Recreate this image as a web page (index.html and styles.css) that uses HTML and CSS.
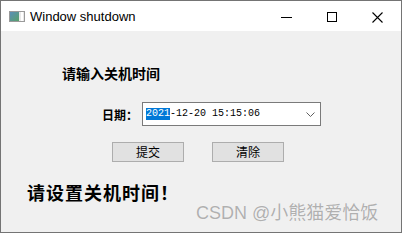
FILE: index.html
```html
<!DOCTYPE html>
<html>
<head>
<meta charset="utf-8">
<link rel="stylesheet" href="styles.css">
</head>
<body>
<div class="window">
  <div class="titlebar">
    <svg class="app-icon" width="16" height="11" viewBox="0 0 16 11">
      <rect x="0.5" y="0.5" width="15" height="10" fill="#e8e8e8" stroke="#9a9a9a"/>
      <defs>
        <linearGradient id="g" x1="0" y1="0" x2="1" y2="1">
          <stop offset="0" stop-color="#5a8fb8"/>
          <stop offset="1" stop-color="#58a06a"/>
        </linearGradient>
      </defs>
      <rect x="1" y="1" width="9" height="9" fill="url(#g)"/>
      <rect x="12" y="1" width="2" height="9" fill="#ffffff"/>
    </svg>
    <span class="title">Window shutdown</span>
    <div class="controls">
      <svg class="ctl" width="46" height="30" viewBox="0 0 46 30"><line x1="18" y1="16.5" x2="29" y2="16.5" stroke="#000" stroke-width="1"/></svg>
      <svg class="ctl" width="46" height="30" viewBox="0 0 46 30"><rect x="18.5" y="11.5" width="9" height="9" fill="none" stroke="#000" stroke-width="1"/></svg>
      <svg class="ctl" width="46" height="30" viewBox="0 0 46 30"><path d="M17.5 11.5 L27.5 21.5 M27.5 11.5 L17.5 21.5" stroke="#000" stroke-width="1.1"/></svg>
    </div>
  </div>
  <div class="content">
    <div class="prompt">请输入关机时间</div>
    <div class="date-row">
      <span class="date-label">日期：</span>
      <div class="date-box">
        <span class="caret"></span><span class="sel">2021</span><span class="rest">-12-20 15:15:06</span>
        <svg class="chev" width="9" height="5" viewBox="0 0 9 5"><path d="M0.5 0.5 L4.5 4.5 L8.5 0.5" fill="none" stroke="#606060" stroke-width="1"/></svg>
      </div>
    </div>
    <div class="buttons">
      <div class="btn">提交</div>
      <div class="btn">清除</div>
    </div>
    <div class="status">请设置关机时间！</div>
    <div class="watermark">CSDN @小熊猫爱恰饭</div>
  </div>
</div>
</body>
</html>
```
FILE: styles.css
```css
html, body {
  margin: 0;
  padding: 0;
  background: #f0f0f0;
}
.window {
  width: 402px;
  height: 233px;
  box-sizing: border-box;
  border: 1px solid #747474;
  background: #f0f0f0;
  display: flex;
  flex-direction: column;
  overflow: hidden;
}
.titlebar {
  height: 30px;
  background: #ffffff;
  display: flex;
  align-items: center;
  flex: none;
}
.app-icon {
  margin-left: 8px;
  margin-top: 1px;
  flex: none;
}
.title {
  margin-left: 5px;
  font-family: "Liberation Sans", Arial, sans-serif;
  font-size: 13px;
  color: #000;
  margin-top: 1px;
}
.controls {
  margin-left: auto;
  display: flex;
  height: 30px;
}
.ctl {
  display: block;
}
.content {
  position: relative;
  flex: 1;
  font-family: "Noto Sans CJK SC", sans-serif;
}
.prompt {
  margin-top: 35px;
  padding-left: 61px;
  font-size: 14px;
  line-height: 14px;
  font-weight: bold;
  color: #000;
}
.date-row {
  margin-top: 22px;
  display: flex;
  align-items: center;
  padding-left: 101px;
}
.date-label {
  font-size: 12px;
  font-weight: bold;
  width: 40px;
  color: #000;
}
.date-box {
  width: 179px;
  height: 24px;
  box-sizing: border-box;
  border: 1px solid #7a7a7a;
  background: #fff;
  display: flex;
  align-items: center;
  padding-left: 3px;
  font-family: "Liberation Mono", monospace;
  font-size: 10px;
  color: #000;
}
.caret {
  width: 1px;
  height: 12px;
  background: #e08020;
  margin-right: -1px;
}
.sel {
  background: #0078d7;
  color: #fff;
  line-height: 12px;
  height: 12px;
  display: inline-block;
}
.rest {
  line-height: 12px;
}
.chev {
  margin-left: auto;
  margin-right: 5px;
  margin-top: 1px;
}
.buttons {
  margin-top: 16px;
  display: flex;
  gap: 28px;
  padding-left: 111px;
}
.btn {
  width: 72px;
  height: 20px;
  box-sizing: border-box;
  border: 1px solid #adadad;
  background: #e1e1e1;
  font-size: 12px;
  line-height: 18px;
  text-align: center;
  color: #000;
}
.status {
  margin-top: 21px;
  padding-left: 26px;
  font-size: 18px;
  line-height: 18px;
  font-weight: bold;
  letter-spacing: 1px;
  color: #000;
}
.watermark {
  position: absolute;
  left: 195px;
  top: 172px;
  font-family: "Liberation Sans", "Noto Sans CJK SC", sans-serif;
  font-size: 18px;
  line-height: 20px;
  color: #b0b0b0;
  text-shadow: 0 0 1px #fff;
  white-space: nowrap;
}
```
